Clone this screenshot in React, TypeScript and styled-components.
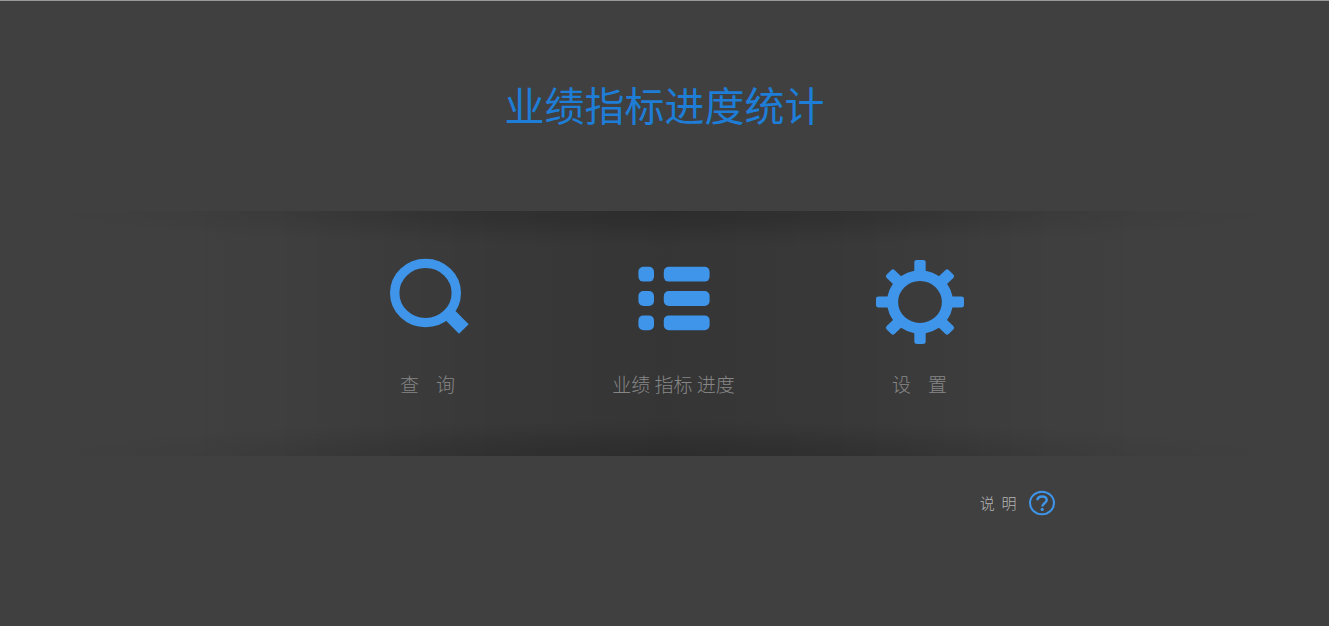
import React from "react";
import styled, { createGlobalStyle } from "styled-components";

const GlobalStyle = createGlobalStyle`
  * {
    box-sizing: border-box;
  }
  html, body, #root {
    min-height: 100vh;
  }
  body {
    margin: 0;
    background: #404040;
    font-family: "Noto Sans CJK SC", "Liberation Sans", sans-serif;
  }
`;

const Page = styled.main`
  min-height: 100vh;
  border-top: 1px solid #999;
  padding: 73px 58px 0 58px;
  background: #404040;

  @media (max-width: 640px) {
    padding-left: 16px;
    padding-right: 16px;
  }
`;

const Title = styled.h1`
  margin: 0 0 77px;
  color: #1e7dd6;
  font-size: 40px;
  font-weight: 400;
  line-height: 60px;
  text-align: center;
`;

const Band = styled.nav`
  display: grid;
  grid-template-columns: repeat(3, minmax(0, 246px));
  justify-content: center;
  padding: 46px 0 58px 18px;
  background:
    radial-gradient(ellipse 52% 36px at 50% 0, rgba(0, 0, 0, 0.17), rgba(0, 0, 0, 0.13) 35%, rgba(0, 0, 0, 0.04) 75%, transparent),
    radial-gradient(ellipse 52% 36px at 50% 100%, rgba(0, 0, 0, 0.17), rgba(0, 0, 0, 0.13) 35%, rgba(0, 0, 0, 0.04) 75%, transparent),
    linear-gradient(
      90deg,
      transparent 8%,
      rgba(0, 0, 0, 0.02) 18%,
      rgba(0, 0, 0, 0.07) 27%,
      rgba(0, 0, 0, 0.12) 36%,
      rgba(0, 0, 0, 0.17) 50%,
      rgba(0, 0, 0, 0.12) 64%,
      rgba(0, 0, 0, 0.07) 73%,
      rgba(0, 0, 0, 0.02) 82%,
      transparent 92%
    );
`;

const MenuButton = styled.button`
  display: flex;
  flex-direction: column;
  align-items: center;
  gap: 25px;
  border: 0;
  padding: 0;
  background: none;
  color: #868686;
  font: inherit;
  cursor: pointer;
`;

const MenuIcon = styled.svg`
  width: 88px;
  height: 88px;
  fill: #3e95ea;
`;

const MenuLabel = styled.span`
  font-size: 19px;
  font-weight: 300;
  line-height: 28px;
  white-space: pre;
`;

const Footer = styled.footer`
  display: flex;
  justify-content: flex-end;
  max-width: 782px;
  margin: 0 auto;
  padding-top: 33px;
`;

const HelpButton = styled.button`
  display: flex;
  align-items: center;
  gap: 12px;
  border: 0;
  padding: 0;
  background: none;
  color: #b4b4b4;
  font: inherit;
  font-size: 15px;
  font-weight: 300;
  line-height: 28px;
  white-space: pre;
  cursor: pointer;
`;

const HelpIcon = styled.svg`
  width: 27px;
  height: 26px;
  fill: none;
  stroke: #3e95ea;
  stroke-width: 2;
`;

const SearchIcon = () => (
  <MenuIcon viewBox="0 0 88 88" aria-hidden="true">
    <ellipse cx="41.5" cy="36" rx="30.8" ry="29.6" fill="none" stroke="#3e95ea" strokeWidth="9.4" />
    <path d="M71.5 54 84.7 67.2 75 76.7 61.8 63.5Z" />
  </MenuIcon>
);

const ListIcon = () => (
  <MenuIcon viewBox="0 0 88 88" aria-hidden="true">
    {[9.8, 34.1, 58.4].map((y) => (
      <g key={y}>
        <rect x="8.4" y={y} width="15.6" height="14.8" rx="5" />
        <rect x="33.8" y={y} width="45.8" height="14.8" rx="5" />
      </g>
    ))}
  </MenuIcon>
);

const GearIcon = () => (
  <MenuIcon viewBox="0 0 88 88" aria-hidden="true">
    <g transform="translate(44 45) scale(1 0.955)">
      <circle r="27.4" fill="none" stroke="#3e95ea" strokeWidth="11" />
      {[0, 45, 90, 135, 180, 225, 270, 315].map((angle) => (
        <rect key={angle} x="-5.7" y="-44" width="11.4" height="16" rx="2.6" transform={`rotate(${angle})`} />
      ))}
    </g>
  </MenuIcon>
);

const items = [
  { label: "查\u00a0\u00a0\u00a0\u00a0询", Icon: SearchIcon },
  { label: "业绩 指标 进度", Icon: ListIcon },
  { label: "设\u00a0\u00a0\u00a0\u00a0置", Icon: GearIcon },
];

export default function App() {
  return (
    <>
      <GlobalStyle />
      <Page>
        <Title>业绩指标进度统计</Title>
        <Band>
          {items.map(({ label, Icon }) => (
            <MenuButton key={label} type="button">
              <Icon />
              <MenuLabel>{label}</MenuLabel>
            </MenuButton>
          ))}
        </Band>
        <Footer>
          <HelpButton type="button">
            {"说\u00a0\u00a0明"}
            <HelpIcon viewBox="0 0 27 26" aria-hidden="true">
              <ellipse cx="13" cy="13" rx="12" ry="11.3" />
              <path strokeWidth="2.4" d="M8.4 10.3C8.5 7.6 10.4 6.5 13.1 6.5c2.7 0 4.6 1.2 4.6 3.5 0 3.3-4.4 3.2-4.4 6.6" />
              <circle cx="13.2" cy="19.4" r="1.6" fill="#3e95ea" stroke="none" />
            </HelpIcon>
          </HelpButton>
        </Footer>
      </Page>
    </>
  );
}
